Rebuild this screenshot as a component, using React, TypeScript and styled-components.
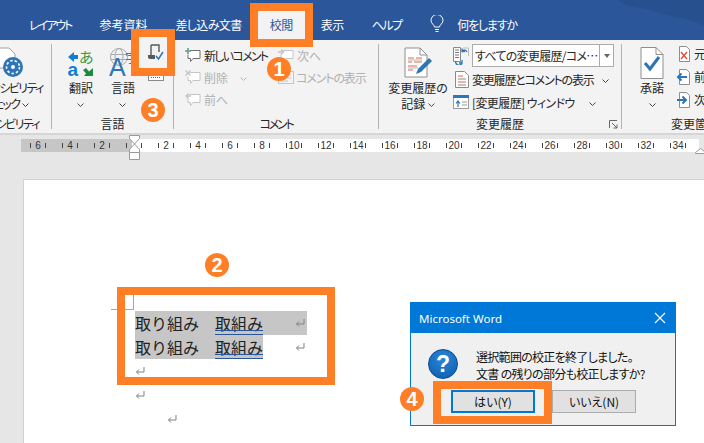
import React from 'react';
import styled, { createGlobalStyle } from 'styled-components';

const GlobalStyle = createGlobalStyle`
  html, body { margin: 0; padding: 0; background: #e6e6e6; }
  * { box-sizing: border-box; }
`;

const ORANGE = '#ff7f27';

const Chevron = () => (
  <ChevronSvg width="7" height="4" viewBox="0 0 7 4">
    <polyline points="0.5,0.5 3.5,3.5 6.5,0.5" fill="none" stroke="#444" strokeWidth="1" />
  </ChevronSvg>
);

const AccessIcon = () => (
  <svg width="32" height="32" viewBox="0 0 32 32">
    <path d="M4 1h14l6 6v14H4z" fill="#fff" stroke="#a0a0a0" />
    <circle cx="22" cy="20" r="10" fill="#2e75b6" />
    <circle cx="22" cy="20" r="6.5" fill="none" stroke="#fff" strokeWidth="1.6" strokeDasharray="2.5 2" />
    <circle cx="22" cy="20" r="2" fill="#fff" />
  </svg>
);

const TranslateIcon = () => (
  <svg width="26" height="30" viewBox="0 0 26 30">
    <polygon points="0,10 6,5 6,8 10,8 10,12 6,12 6,15" fill="#0f7fd6" />
    <text x="11" y="16" fontSize="15" fill="#3d9a3d" fontFamily="Noto Sans CJK JP, sans-serif">あ</text>
    <text x="-0.5" y="29" fontSize="19" fontWeight="700" fill="#0f7fd6" fontFamily="Liberation Sans, sans-serif">a</text>
    <polygon points="25,29 16,29 18,26.5 15,23 18,21 21,24.5 25,21" fill="#1e8a3e" />
  </svg>
);

const LanguageIcon = () => (
  <svg width="30" height="30" viewBox="0 0 30 30">
    <circle cx="11" cy="10" r="8.5" fill="none" stroke="#aaa" />
    <ellipse cx="11" cy="10" rx="4" ry="8.5" fill="none" stroke="#aaa" />
    <path d="M2.5 7.5h17M2.5 12.5h17" stroke="#aaa" />
    <text x="17" y="15" fontSize="13" fill="#2e75b6" fontFamily="Noto Sans CJK JP, sans-serif">字</text>
    <text x="1" y="29" fontSize="25" fill="#2e75b6" fontFamily="Liberation Sans, sans-serif">A</text>
  </svg>
);

const ProofIcon = () => (
  <svg width="17" height="17" viewBox="0 0 17 17">
    <path d="M4 1h8v7M4 1v10" fill="none" stroke="#595959" strokeWidth="1.4" />
    <path d="M1 11h7v4H3a2 2 0 0 1-2-2z" fill="#595959" />
    <polyline points="9,12 11.5,15 16,8" fill="none" stroke="#2e75b6" strokeWidth="1.5" />
  </svg>
);

const KeyboardIcon = () => (
  <svg width="16" height="14" viewBox="0 0 16 14">
    <rect x="0.5" y="0.5" width="15" height="13" fill="#fff" stroke="#8a8a8a" />
    <path d="M3 10.5h10M3 8h10" stroke="#666" strokeDasharray="1 1" />
  </svg>
);

const CommentIcon = ({ off, mode }: { off?: boolean; mode: 'new' | 'del' | 'next' | 'prev' }) => {
  const line = off ? '#c4c4c4' : '#6f6f6f';
  const mark = off ? '#bcd0c4' : '#5fa37f';
  return (
    <svg width="16" height="15" viewBox="0 0 16 15">
      <path d="M4.5 2.5h10.5v8H8l-2.5 3v-3H3v-4" fill="#fff" stroke={line} />
      {mode === 'new' && <path d="M3 0v6M0 3h6" stroke={mark} strokeWidth="1.6" />}
      {mode === 'del' && <path d="M0.5 0.5l5 5M5.5 0.5l-5 5" stroke={line} strokeWidth="1.4" />}
      {mode === 'next' && <path d="M0 4h5M3 1.5l2.5 2.5-2.5 2.5" stroke={line} fill="none" strokeWidth="1.3" />}
      {mode === 'prev' && <path d="M6 4H1M3.5 1.5L1 4l2.5 2.5" stroke={line} fill="none" strokeWidth="1.3" />}
    </svg>
  );
};

const ShowCommentIcon = () => (
  <svg width="16" height="14" viewBox="0 0 16 14">
    <rect x="0.5" y="1.5" width="15" height="12" fill="#f3f3f3" stroke="#c4c4c4" />
    <path d="M3 5h10M3 8h10M3 11h7" stroke="#c4c4c4" />
  </svg>
);

const TrackIcon = () => (
  <svg width="32" height="32" viewBox="0 0 32 32">
    <path d="M3 1h15l7 7v22H3z" fill="#fff" stroke="#8f8f8f" />
    <path d="M18 1v7h7" fill="none" stroke="#8f8f8f" />
    <path d="M6 11h6M14 11h6M6 15h4M12 15h8M6 19h9M6 23h5" stroke="#d9694a" strokeWidth="1" />
    <path d="M6 13h14M6 21h10" stroke="#b5b5b5" />
    <path d="M14 27l2-5 11-11 3 3-11 11z" fill="#2e75b6" />
  </svg>
);

const MarkupIcon = () => (
  <svg width="16" height="18" viewBox="0 0 16 18">
    <path d="M0.5 0.5h7v14h-7z" fill="#fff" stroke="#8a8a8a" />
    <path d="M2 3h4M2 5.5h4M2 8h4M2 10.5h4" stroke="#777" />
    <path d="M10 1h5.5v8" fill="none" stroke="#bbb" />
    <path d="M14 5a3 3 0 0 0-5-1M9 1.5v3h3" fill="none" stroke="#2e75b6" strokeWidth="1.3" />
    <path d="M3 14a3 3 0 0 0 6 2M9 13v3H6" fill="none" stroke="#2e75b6" strokeWidth="1.3" />
  </svg>
);

const ShowMarkupIcon = () => (
  <svg width="14" height="17" viewBox="0 0 14 17">
    <path d="M0.5 0.5h9l4 4v12H0.5z" fill="#fff" stroke="#8a8a8a" />
    <path d="M3 5h5M3 11h8" stroke="#d9694a" />
    <path d="M3 8h8M3 14h8" stroke="#8a8a8a" />
  </svg>
);

const PaneIcon = () => (
  <svg width="16" height="14" viewBox="0 0 16 14">
    <rect x="0.5" y="0.5" width="15" height="13" fill="#fff" stroke="#9a9a9a" />
    <rect width="16" height="3" fill="#2e75b6" />
    <path d="M5 12V7M3 8.5L5 6l2 2.5" fill="none" stroke="#2e75b6" strokeWidth="1.2" />
    <path d="M9 7h5M9 10h5" stroke="#9a9a9a" />
  </svg>
);

const AcceptIcon = () => (
  <svg width="24" height="32" viewBox="0 0 24 32">
    <path d="M1 0.5h15l7 7v24H1z" fill="#fff" stroke="#8f8f8f" />
    <path d="M16 0.5v7h7" fill="none" stroke="#8f8f8f" />
    <polyline points="5,16 10,22 19,10" fill="none" stroke="#2e75b6" strokeWidth="3" />
  </svg>
);

const SideDocIcon = ({ mode }: { mode: 'x' | 'left' | 'right' }) => (
  <svg width="16" height="16" viewBox="0 0 16 16">
    <path d="M3.5 0.5h7l3 3v12h-10z" fill="#fff" stroke="#8f8f8f" />
    {mode === 'x' && <path d="M5 6l6 7M11 6l-6 7" stroke="#d9533a" strokeWidth="1.4" />}
    {mode === 'left' && <path d="M11 8H2M5.5 4.5L2 8l3.5 3.5" fill="none" stroke="#2e75b6" strokeWidth="2" />}
    {mode === 'right' && <path d="M1 8h9M6.5 4.5L10 8l-3.5 3.5" fill="none" stroke="#2e75b6" strokeWidth="2" />}
  </svg>
);

const ParaMark = () => (
  <MarkSvg width="10" height="10" viewBox="0 0 10 10">
    <path d="M9 1v5H1.5M4 3.5L1.5 6 4 8.5" fill="none" stroke="#808080" />
  </MarkSvg>
);

const rulerNumbers = ['6', '4', '2', '', '2', '4', '6', '8', '10', '12', '14', '16', '18', '20', '22', '24', '26', '28', '30', '32', '34'];

const App = () => {
  return (
    <Screen>
      <GlobalStyle />

      <TabBar>
        <BarPattern width="90" height="28" viewBox="0 0 90 28">
          <path d="M4 0c10 10 26 6 38 12 14 6 30 4 48 14V0z" fill="#27508f" />
        </BarPattern>
        <Tab $ls={-2}>レイアウト</Tab>
        <Tab>参考資料</Tab>
        <Tab $ls={-0.6}>差し込み文書</Tab>
        <Tab $active $ls={-0.5}>校閲</Tab>
        <Tab $ls={-0.5}>表示</Tab>
        <Tab $ls={-1.6}>ヘルプ</Tab>
        <TellMe>
          <svg width="14" height="18" viewBox="0 0 14 18">
            <path d="M4.5 12c0-2-3.5-3.5-3.5-6.5a6 6 0 0 1 12 0c0 3-3.5 4.5-3.5 6.5z" fill="none" stroke="#fff" />
            <path d="M5 14.5h4M5.5 16.5h3" stroke="#fff" />
          </svg>
          <Kana $ls={-1.2}>何をしますか</Kana>
        </TellMe>
      </TabBar>

      <Ribbon>
        <Group $w={52} $clip $end>
          <Body $right={12}>
            <BigButton $w={64}>
              <IconSlot><AccessIcon /></IconSlot>
              <BigText><Kana $ls={-1.6}>アクセシビリティ</Kana><br /><Kana $ls={-1.6}>チェック</Kana> <Chevron /></BigText>
            </BigButton>
          </Body>
          <GroupLabel $right={12} $ls={-1.6}>アクセシビリティ</GroupLabel>
        </Group>

        <Group $w={122}>
          <Body $left={8}>
            <BigButton $w={42}>
              <IconSlot><TranslateIcon /></IconSlot>
              <BigText>翻訳<br /><Chevron /></BigText>
            </BigButton>
            <BigButton $w={42}>
              <IconSlot><LanguageIcon /></IconSlot>
              <BigText>言語<br /><Chevron /></BigText>
            </BigButton>
            <SmallIcons>
              <KeyboardIcon />
            </SmallIcons>
          </Body>
          <GroupLabel>言語</GroupLabel>
        </Group>

        <Group $w={205}>
          <Body $left={11}>
            <ActionColumn $w={93}>
              <Action><CommentIcon mode="new" /><Kana $ls={-1.7}>新しいコメント</Kana></Action>
              <Action $off><CommentIcon off mode="del" /><span>削除</span><DisabledChevron><Chevron /></DisabledChevron></Action>
              <Action $off><CommentIcon off mode="prev" /><span>前へ</span></Action>
            </ActionColumn>
            <ActionColumn $w={90}>
              <Action $off><CommentIcon off mode="next" /><span>次へ</span></Action>
              <Action $off $tight><ShowCommentIcon /><Kana $ls={-1.1}>コメントの表示</Kana></Action>
            </ActionColumn>
          </Body>
          <GroupLabel $ls={-2.2}>コメント</GroupLabel>
        </Group>

        <Group $w={243}>
          <Body $left={6}>
            <BigButton $w={66}>
              <IconSlot><TrackIcon /></IconSlot>
              <BigText>変更履歴の<br />記録 <Chevron /></BigText>
            </BigButton>
            <TrackColumn>
              <TrackRow>
                <MarkupIcon />
                <Combo>
                  <ComboText>すべての変更履歴/コメ…</ComboText>
                  <ComboArrow />
                </Combo>
              </TrackRow>
              <TrackRow $indent={2}>
                <ShowMarkupIcon />
                <Kana $ls={-1.2}>変更履歴とコメントの表示</Kana>
                <RowChevron $gap={5}><Chevron /></RowChevron>
              </TrackRow>
              <TrackRow>
                <PaneIcon />
                <Kana $ls={-0.6}>[変更履歴] ウィンドウ</Kana>
                <RowChevron $gap={11}><Chevron /></RowChevron>
              </TrackRow>
            </TrackColumn>
          </Body>
          <GroupLabel>変更履歴</GroupLabel>
          <Launcher width="9" height="9" viewBox="0 0 9 9">
            <path d="M0.5 8V0.5H8M3 3l5 5M8 4.5V8H4.5" fill="none" stroke="#666" />
          </Launcher>
        </Group>

        <Group $w={82} $clip $last>
          <Body $left={18}>
            <BigButton $w={24}>
              <IconSlot><AcceptIcon /></IconSlot>
              <BigText>承諾<br /><Chevron /></BigText>
            </BigButton>
            <ChangeColumn>
              <ChangeRow><SideDocIcon mode="x" /><span>元に戻す</span></ChangeRow>
              <ChangeRow><SideDocIcon mode="left" /><span>前の変更箇所</span></ChangeRow>
              <ChangeRow><SideDocIcon mode="right" /><span>次の変更箇所</span></ChangeRow>
            </ChangeColumn>
          </Body>
          <GroupLabel $left={49}>変更箇所</GroupLabel>
        </Group>
      </Ribbon>

      <RulerArea>
        <Ruler>
          {rulerNumbers.map((n, i) => (
            <RulerCell key={i} $dark={i < 3}>
              <Tick />
              <RulerNumber>{n}</RulerNumber>
              <Tick />
            </RulerCell>
          ))}
        </Ruler>
        <IndentMarker width="11" height="26" viewBox="0 0 11 26">
          <path d="M0.5 0.5h10v3L5.5 9 .5 3.5zM5.5 9l5 5.5v3H.5v-3zM.5 17.5h10v7H.5z" fill="#fff" stroke="#9a9a9a" />
        </IndentMarker>
        <RightMarker width="11" height="6" viewBox="0 0 11 6">
          <path d="M.5 5.5v-1L5.5.5l5 4v1z" fill="#fff" stroke="#9a9a9a" />
        </RightMarker>
      </RulerArea>

      <Page>
        <CropMark />
        <TextLine>
          <Selected>取り組み</Selected>
          <Selected $w={16} />
          <Underlined>取組み</Underlined>
          <Selected $w={32} />
          <Selected $w={12}><ParaMark /></Selected>
        </TextLine>
        <TextLine>
          <Selected>取り組み</Selected>
          <Selected $w={16} />
          <Underlined>取組み</Underlined>
          <Blank $w={32} />
          <ParaMark />
        </TextLine>
        <TextLine><ParaMark /></TextLine>
        <TextLine><ParaMark /></TextLine>
        <TextLine><Blank $w={32} /><ParaMark /></TextLine>
      </Page>

      <Dialog>
        <DialogTitle>
          <span>Microsoft Word</span>
          <svg width="12" height="12" viewBox="0 0 12 12">
            <path d="M1 1l10 10M11 1L1 11" stroke="#fff" strokeWidth="1.1" />
          </svg>
        </DialogTitle>
        <DialogBody>
          <Message>
            <QuestionMark>?</QuestionMark>
            <MessageText>
              選択範囲の校正を終了しました。<br />
              文書 の残りの部分も校正しますか?
            </MessageText>
          </Message>
          <DialogButtons>
            <DialogButton $primary>はい(Y)</DialogButton>
            <DialogButton>いいえ(N)</DialogButton>
          </DialogButtons>
        </DialogBody>
      </Dialog>

      <Callout $x={250} $y={3} $w={63} $h={44} />
      <Callout $x={131} $y={29} $w={44} $h={47} $fill="#f3f3f3">
        <ProofIcon />
      </Callout>
      <Callout $x={117} $y={287} $w={218} $h={98} />
      <Callout $x={433} $y={381} $w={119} $h={43} />

      <Badge $x={279} $y={69}>1</Badge>
      <Badge $x={217} $y={265}>2</Badge>
      <Badge $x={153} $y={110}>3</Badge>
      <Badge $x={412} $y={399}>4</Badge>
    </Screen>
  );
};

export default App;

const Screen = styled.div`
  position: relative;
  width: 704px;
  height: 443px;
  overflow: hidden;
  display: flex;
  flex-direction: column;
  background: #e6e6e6;
  color: #262626;
  font-family: "Noto Sans CJK JP", "Noto Sans", sans-serif;
  font-size: 12px;
  font-feature-settings: "palt";
`;

// Meiryo UI sets kana much narrower than Noto, so kana-heavy labels get tightened
const Kana = styled.span<{ $ls: number }>`
  letter-spacing: ${(p) => p.$ls}px;
`;

const TabBar = styled.div`
  position: relative;
  flex: none;
  height: 40px;
  padding-left: 15px;
  display: flex;
  align-items: flex-end;
  background: #2b579a;
`;

const BarPattern = styled.svg`
  position: absolute;
  top: 0;
  right: 0;
`;

const Tab = styled.div<{ $active?: boolean; $ls?: number }>`
  height: 30px;
  padding: 0 14px 2px;
  display: flex;
  align-items: center;
  letter-spacing: ${(p) => p.$ls ?? 0}px;
  color: ${(p) => (p.$active ? '#2b579a' : '#fff')};
  background: ${(p) => (p.$active ? '#f3f3f3' : 'transparent')};
`;

const TellMe = styled.div`
  height: 30px;
  margin-left: 15px;
  padding-bottom: 2px;
  display: flex;
  align-items: center;
  gap: 13px;
  color: #fff;
`;

const Ribbon = styled.div`
  flex: none;
  height: 93px;
  padding: 4px 0;
  display: flex;
  background: #f3f3f3;
`;

const Group = styled.div<{ $w: number; $clip?: boolean; $end?: boolean; $last?: boolean }>`
  position: relative;
  flex: none;
  width: ${(p) => p.$w}px;
  display: flex;
  flex-direction: column;
  align-items: ${(p) => (p.$end ? 'flex-end' : 'stretch')};
  overflow-x: ${(p) => (p.$clip ? 'clip' : 'visible')};
  border-right: ${(p) => (p.$last ? '0' : '1px solid #b4b4b4')};
`;

const Body = styled.div<{ $left?: number; $right?: number }>`
  flex: none;
  height: 75px;
  display: flex;
  padding-left: ${(p) => p.$left ?? 0}px;
  padding-right: ${(p) => p.$right ?? 0}px;
`;

const GroupLabel = styled.div<{ $left?: number; $right?: number; $ls?: number }>`
  height: 10px;
  line-height: 10px;
  white-space: nowrap;
  letter-spacing: ${(p) => p.$ls ?? 0}px;
  text-align: ${(p) => (p.$left !== undefined ? 'left' : 'center')};
  padding-left: ${(p) => p.$left ?? 0}px;
  padding-right: ${(p) => p.$right ?? 0}px;
`;

const BigButton = styled.div<{ $w: number }>`
  flex: none;
  width: ${(p) => p.$w}px;
  display: flex;
  flex-direction: column;
  align-items: center;
`;

const IconSlot = styled.div`
  height: 33px;
  margin-top: 3px;
  display: flex;
  justify-content: center;
`;

const BigText = styled.div`
  line-height: 15.5px;
  text-align: center;
  white-space: nowrap;
`;

const ChevronSvg = styled.svg`
  display: inline-block;
  vertical-align: middle;
`;

const SmallIcons = styled.div`
  margin-left: 4px;
  padding-top: 23px;
`;

const ActionColumn = styled.div<{ $w: number }>`
  flex: none;
  width: ${(p) => p.$w}px;
  display: flex;
  flex-direction: column;
`;

const Action = styled.div<{ $off?: boolean; $tight?: boolean }>`
  height: 22px;
  display: flex;
  align-items: center;
  gap: ${(p) => (p.$tight ? '2px' : '3px')};
  white-space: nowrap;
  color: ${(p) => (p.$off ? '#b1b1b1' : '#262626')};
`;

const DisabledChevron = styled.span`
  margin-left: 9px;
  opacity: 0.35;
`;

const TrackColumn = styled.div`
  margin-left: 2px;
  display: flex;
  flex-direction: column;
  gap: 1px;
`;

const TrackRow = styled.div<{ $indent?: number }>`
  min-height: 22px;
  padding-left: ${(p) => p.$indent ?? 0}px;
  display: flex;
  align-items: center;
  gap: 3px;
  white-space: nowrap;
`;

const RowChevron = styled.span<{ $gap: number }>`
  margin-left: ${(p) => p.$gap}px;
`;

const Combo = styled.div`
  width: 142px;
  height: 23px;
  display: flex;
  align-items: center;
  background: #fff;
  border: 1px solid #ababab;
`;

const ComboText = styled.div`
  flex: 1;
  padding-left: 2px;
  letter-spacing: -0.7px;
  white-space: nowrap;
  overflow: hidden;
`;

const ComboArrow = styled.div`
  flex: none;
  width: 14px;
  height: 100%;
  display: flex;
  align-items: center;
  justify-content: center;
  border-left: 1px solid #ababab;
  &::after {
    content: '';
    border-top: 4px solid #666;
    border-left: 3px solid transparent;
    border-right: 3px solid transparent;
  }
`;

const Launcher = styled.svg`
  position: absolute;
  right: 3px;
  bottom: 0;
`;

const ChangeColumn = styled.div`
  margin-left: 12px;
  padding-top: 1px;
  display: flex;
  flex-direction: column;
  gap: 6px;
`;

const ChangeRow = styled.div`
  display: flex;
  align-items: center;
  gap: 2px;
  height: 17px;
  white-space: nowrap;
`;

const RulerArea = styled.div`
  position: relative;
  flex: none;
  height: 46px;
  padding: 4px 0 0 21px;
  border-top: 2px solid #d6d6d6;
`;

const Ruler = styled.div`
  width: 678px;
  height: 13px;
  display: flex;
  background: #fff;
`;

const RulerCell = styled.div<{ $dark?: boolean }>`
  flex: none;
  width: 32px;
  padding: 0 7px 0 9px;
  display: flex;
  align-items: center;
  justify-content: space-between;
  background: ${(p) => (p.$dark ? '#c6c6c6' : 'transparent')};
  &:nth-child(4) {
    background: linear-gradient(90deg, #c6c6c6 0 15px, transparent 15px);
  }
`;

const Tick = styled.span`
  width: 1px;
  height: 5px;
  background: #444;
`;

const RulerNumber = styled.span`
  font-size: 10px;
  font-family: "Liberation Sans", sans-serif;
  color: #333;
`;

const IndentMarker = styled.svg`
  position: absolute;
  left: 129px;
  top: 0;
`;

const RightMarker = styled.svg`
  position: absolute;
  left: 695px;
  top: 13px;
`;

const Page = styled.div`
  position: relative;
  flex: 1;
  margin-left: 23px;
  padding: 131px 0 0 111px;
  background: #fff;
  border-top: 1px solid #d2d2d2;
  border-left: 1px solid #d2d2d2;
`;

const CropMark = styled.div`
  position: absolute;
  left: 87px;
  top: 107px;
  width: 23px;
  height: 23px;
  border-right: 1px solid #a6a6a6;
  border-bottom: 1px solid #a6a6a6;
`;

const TextLine = styled.div`
  height: 24px;
  display: flex;
  font-size: 16px;
  font-feature-settings: normal;
  line-height: 24px;
  color: #222;
  white-space: nowrap;
`;

const Selected = styled.span<{ $w?: number }>`
  display: flex;
  align-items: center;
  background: #c6c6c6;
  ${(p) => (p.$w ? `width: ${p.$w}px;` : '')}
`;

const Blank = styled.span<{ $w: number }>`
  width: ${(p) => p.$w}px;
`;

const Underlined = styled(Selected)`
  position: relative;
  &::after {
    content: '';
    position: absolute;
    left: 0;
    right: 0;
    top: 19px;
    height: 3px;
    border-top: 1px solid #2b579a;
    border-bottom: 1px solid #2b579a;
  }
`;

const MarkSvg = styled.svg`
  align-self: center;
  flex: none;
`;

const Dialog = styled.div`
  position: absolute;
  left: 410px;
  top: 302px;
  width: 266px;
  height: 124px;
  display: flex;
  flex-direction: column;
  background: #f0f0f0;
  border: 1px solid #0078d7;
`;

const DialogTitle = styled.div`
  height: 30px;
  padding: 0 9px 0 8px;
  display: flex;
  align-items: center;
  justify-content: space-between;
  background: #0078d7;
  color: #fff;
  font-family: "Noto Sans", sans-serif;
  font-size: 11.5px;
`;

const DialogBody = styled.div`
  flex: 1;
  display: flex;
  flex-direction: column;
`;

const Message = styled.div`
  height: 57px;
  padding: 16px 0 0 17px;
  display: flex;
`;

const QuestionMark = styled.div`
  width: 30px;
  height: 30px;
  display: flex;
  align-items: center;
  justify-content: center;
  border-radius: 50%;
  background: radial-gradient(circle at 50% 30%, #2c86d8, #0a5cad);
  border: 1px solid #0b4a8c;
  color: #fff;
  font-family: "Liberation Sans", sans-serif;
  font-size: 23px;
  font-weight: 700;
`;

const MessageText = styled.div`
  margin: -1px 0 0 18px;
  line-height: 17px;
  letter-spacing: -0.7px;
  white-space: nowrap;
  color: #111;
`;

const DialogButtons = styled.div`
  padding-left: 40px;
  display: flex;
  gap: 17px;
`;

const DialogButton = styled.div<{ $primary?: boolean }>`
  width: 84px;
  height: 23px;
  display: flex;
  align-items: center;
  justify-content: center;
  background: #e1e1e1;
  color: #111;
  border: ${(p) => (p.$primary ? '2px solid #0078d7' : '1px solid #adadad')};
`;

const Callout = styled.div<{ $x: number; $y: number; $w: number; $h: number; $fill?: string }>`
  position: absolute;
  left: ${(p) => p.$x}px;
  top: ${(p) => p.$y}px;
  width: ${(p) => p.$w}px;
  height: ${(p) => p.$h}px;
  padding: 7px 0 0 8px;
  border: 8px solid ${ORANGE};
  background: ${(p) => p.$fill ?? 'transparent'};
`;

const Badge = styled.div<{ $x: number; $y: number }>`
  position: absolute;
  left: ${(p) => p.$x - 12}px;
  top: ${(p) => p.$y - 12}px;
  width: 24px;
  height: 24px;
  display: flex;
  align-items: center;
  justify-content: center;
  border-radius: 50%;
  background: ${ORANGE};
  color: #fff;
  font-family: "Liberation Sans", sans-serif;
  font-size: 20px;
  font-weight: 700;
`;
